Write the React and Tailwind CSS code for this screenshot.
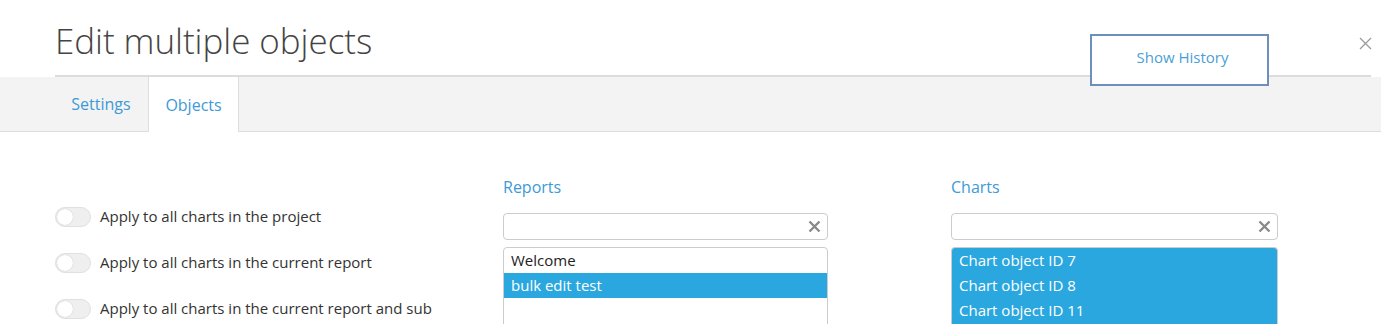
import React from "react";

function Toggle() {
  return (
    <span className="relative inline-block w-[36px] h-[20px] rounded-full bg-[#efefef] border border-[#e0e0e0] shrink-0">
      <span className="absolute left-[1px] top-[1px] w-[16px] h-[16px] rounded-full bg-white shadow-[0_0_1px_rgba(0,0,0,0.25)]" />
    </span>
  );
}

function ClearX() {
  return (
    <svg width="13" height="13" viewBox="0 0 13 13" className="shrink-0">
      <path d="M1.5 1.5 L11.5 11.5 M11.5 1.5 L1.5 11.5" stroke="#8a8a8a" strokeWidth="2.4" strokeLinecap="butt" />
    </svg>
  );
}

function SearchBox() {
  return (
    <div className="h-[27px] w-full rounded-[4px] border border-[#cccccc] bg-white flex items-center justify-end pr-[6px]">
      <ClearX />
    </div>
  );
}

export default function App() {
  const font = { fontFamily: '"Open Sans", "Noto Sans", sans-serif' };
  return (
    <div className="w-[1381px] h-[324px] overflow-hidden bg-white relative" style={font}>
      {/* header */}
      <div className="h-[77px] relative">
        <div className="pl-[55px] pt-[18px]">
          <h1 className="text-[35px] font-light text-[#444444] leading-[46px] tracking-[-0.05px]">Edit multiple objects</h1>
        </div>
        <div className="absolute left-[55px] right-[10px] bottom-0 h-[2px] bg-[#dcdcdc]" />
        <button className="absolute left-[1090px] top-[34px] w-[179px] h-[52px] border-[2px] border-[#6e8fbe] bg-white text-[15px] text-[#4aa0d5] flex items-center justify-center pb-[6px] pl-[6px] z-10">
          Show History
        </button>
        <svg className="absolute left-[1359px] top-[37px]" width="13" height="13" viewBox="0 0 13 13">
          <path d="M1 1 L12 12 M12 1 L1 12" stroke="#9a9a9a" strokeWidth="1.3" />
        </svg>
      </div>
      {/* tabs */}
      <div className="h-[55px] bg-[#f3f3f3] border-b border-[#dddddd] flex pl-[55px]">
        <div className="w-[93px] h-full flex items-center justify-center text-[16px] text-[#3d9ad6] pr-[1px]">Settings</div>
        <div className="w-[91px] h-[55px] bg-white border-x border-[#dddddd] flex items-center justify-center text-[16px] text-[#3d9ad6]">Objects</div>
      </div>
      {/* content */}
      <div className="grid grid-cols-[448px_448px_448px] pl-[55px] pt-[44px]">
        <div className="flex flex-col gap-[26px] pt-[31px]">
          {[
            "Apply to all charts in the project",
            "Apply to all charts in the current report",
            "Apply to all charts in the current report and sub",
          ].map((t) => (
            <div key={t} className="flex items-center gap-[9px] h-[20px]">
              <Toggle />
              <span className="text-[15px] text-[#333333] whitespace-nowrap pb-[1px]">{t}</span>
            </div>
          ))}
        </div>
        <div className="w-[325px] flex flex-col">
          <div className="text-[16px] text-[#3d9ad6] leading-[22px] h-[37px]">Reports</div>
          <SearchBox />
          <div className="mt-[7px] h-[100px] rounded-t-[4px] border border-[#cccccc] bg-white overflow-hidden text-[15px]">
            <div className="h-[25px] px-[7px] flex items-center text-[#222222]">Welcome</div>
            <div className="h-[25px] px-[7px] flex items-center bg-[#2ba7df] text-white">bulk edit test</div>
          </div>
        </div>
        <div className="w-[327px] flex flex-col">
          <div className="text-[16px] text-[#3d9ad6] leading-[22px] h-[37px]">Charts</div>
          <SearchBox />
          <div className="mt-[7px] h-[100px] rounded-t-[4px] border border-[#cccccc] bg-[#2ba7df] overflow-hidden text-[15px] text-white">
            <div className="h-[25px] px-[7px] flex items-center">Chart object ID 7</div>
            <div className="h-[25px] px-[7px] flex items-center">Chart object ID 8</div>
            <div className="h-[25px] px-[7px] flex items-center">Chart object ID 11</div>
          </div>
        </div>
      </div>
    </div>
  );
}
